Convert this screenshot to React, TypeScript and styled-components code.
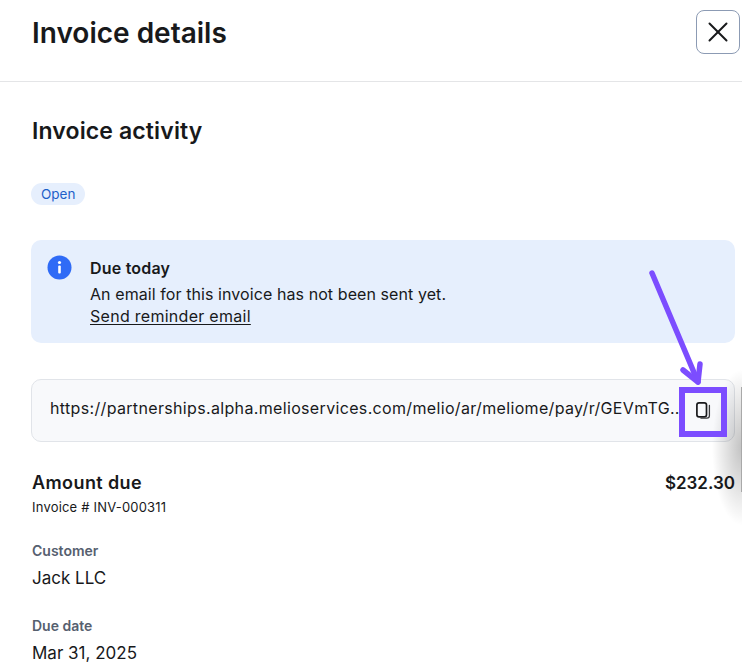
import React from "react";
import styled, { createGlobalStyle } from "styled-components";
import { X } from "lucide-react";

const GlobalStyle = createGlobalStyle`
  html, body {
    margin: 0;
    padding: 0;
    background: #fff;
  }
  body {
    font-family: "Inter", "Noto Sans", sans-serif;
    color: #18191b;
  }
`;

const Page = styled.div`
  position: relative;
  width: 742px;
  height: 671px;
  overflow: hidden;
`;

const Header = styled.header`
  height: 82px;
  padding: 10px 2px 0 32px;
  box-sizing: border-box;
  border-bottom: 1px solid #e4e5e7;
  display: flex;
  justify-content: space-between;
  align-items: flex-start;
`;

const Title = styled.h1`
  margin: 6px 0 0;
  font-size: 28px;
  line-height: 34px;
  font-weight: 600;
`;

const CloseButton = styled.button`
  width: 44px;
  height: 44px;
  padding: 0;
  background: #fff;
  border: 1px solid #8c9bb4;
  border-radius: 8px;
  display: flex;
  align-items: center;
  justify-content: center;
  color: #18191b;
`;

const Content = styled.main`
  padding: 35px 7px 0 31px;
`;

const SectionTitle = styled.h2`
  margin: 0 0 0 1px;
  font-size: 23px;
  line-height: 28px;
  font-weight: 600;
  letter-spacing: 0.13px;
`;

const Badge = styled.span`
  display: inline-block;
  margin-top: 38px;
  height: 22px;
  padding: 0 10px;
  border-radius: 11px;
  background: #e6effd;
  color: #1f5fc9;
  font-size: 13.5px;
  line-height: 22px;
`;

const Banner = styled.section`
  margin-top: 35px;
  height: 103px;
  box-sizing: border-box;
  padding: 15px 16px;
  background: #e6effd;
  border-radius: 10px;
  display: flex;
  gap: 18px;
`;

const BannerIcon = styled.svg`
  width: 25px;
  height: 25px;
  flex: none;
`;

const BannerText = styled.div`
  font-size: 16px;
  line-height: 22px;
  padding-top: 2px;
  letter-spacing: 0.08px;
`;

const BannerTitle = styled.div`
  font-weight: 600;
  margin-bottom: 4px;
  letter-spacing: 0.2px;
`;

const BannerLink = styled.a`
  display: block;
  color: #18191b;
  text-decoration: underline;
  text-underline-offset: 2px;
  letter-spacing: 0.28px;
`;

const LinkBox = styled.div`
  margin-top: 36px;
  height: 63px;
  box-sizing: border-box;
  padding: 0 14px 0 18px;
  background: #f8f9fb;
  border: 1px solid #e1e4e9;
  border-radius: 10px;
  display: flex;
  align-items: center;
  justify-content: space-between;
`;

const LinkText = styled.span`
  width: 632px;
  margin-bottom: 6px;
  overflow: hidden;
  white-space: nowrap;
  font-size: 16px;
  letter-spacing: 0.34px;
`;

const CopyButton = styled.span`
  width: 34px;
  height: 36px;
  display: flex;
  align-items: center;
  justify-content: center;
`;

const AmountRow = styled.div`
  margin: 29px 0 0 1px;
  display: flex;
  justify-content: space-between;
  align-items: center;
  font-size: 17px;
  line-height: 24px;
  font-weight: 600;
`;

const AmountLabel = styled.span`
  font-size: 18px;
  letter-spacing: 0.4px;
`;

const InvoiceNumber = styled.div`
  margin: 3px 0 0 1px;
  font-size: 13px;
  line-height: 18px;
  letter-spacing: 0.2px;
`;

const Field = styled.div`
  margin: 26px 0 0 1px;
`;

const FieldLabel = styled.div`
  font-size: 14px;
  line-height: 18px;
  font-weight: 600;
  color: #56606f;
`;

const FieldValue = styled.div`
  margin-top: 5px;
  font-size: 17px;
  line-height: 26px;
`;

const EdgeShadow = styled.div`
  position: absolute;
  top: 370px;
  right: 0;
  width: 30px;
  height: 155px;
  background: radial-gradient(ellipse 30px 78px at 100% 50%, rgba(0, 0, 0, 0.24), rgba(0, 0, 0, 0));
  pointer-events: none;

  &::after {
    content: "";
    position: absolute;
    top: 17px;
    right: 0;
    width: 1px;
    height: 105px;
    background: #a9a9a9;
  }
`;

const HighlightBox = styled.div`
  position: absolute;
  left: 679px;
  top: 387px;
  width: 48px;
  height: 50px;
  box-sizing: border-box;
  border: 6px solid #7c4dff;
`;

const Arrow = styled.svg`
  position: absolute;
  left: 640px;
  top: 260px;
  width: 70px;
  height: 125px;
`;

export default function App() {
  return (
    <Page>
      <GlobalStyle />
      <Header>
        <Title>Invoice details</Title>
        <CloseButton aria-label="Close">
          <X size={34} strokeWidth={1.4} />
        </CloseButton>
      </Header>
      <Content>
        <SectionTitle>Invoice activity</SectionTitle>
        <Badge>Open</Badge>
        <Banner>
          <BannerIcon viewBox="0 0 25 25">
            <circle cx="12.5" cy="12.5" r="12" fill="#2f6bf6" />
            <rect x="11.2" y="10.5" width="2.6" height="8" rx="1" fill="#fff" />
            <circle cx="12.5" cy="7.5" r="1.6" fill="#fff" />
          </BannerIcon>
          <BannerText>
            <BannerTitle>Due today</BannerTitle>
            <div>An email for this invoice has not been sent yet.</div>
            <BannerLink>Send reminder email</BannerLink>
          </BannerText>
        </Banner>
        <LinkBox>
          <LinkText>https://partnerships.alpha.melioservices.com/melio/ar/meliome/pay/r/GEVmTG..</LinkText>
          <CopyButton>
            <svg width="15" height="17" viewBox="0 0 15 17" fill="none">
              <rect x="0.9" y="0.9" width="9.6" height="14" rx="2.2" stroke="#18191b" strokeWidth="1.7" />
              <path d="M13.4 3.5V13.8a2.4 2.4 0 0 1-2.4 2.4H5" stroke="#3a3b3d" strokeWidth="1.3" strokeLinecap="round" />
            </svg>
          </CopyButton>
        </LinkBox>
        <AmountRow>
          <AmountLabel>Amount due</AmountLabel>
          <span>$232.30</span>
        </AmountRow>
        <InvoiceNumber>Invoice # INV-000311</InvoiceNumber>
        <Field>
          <FieldLabel>Customer</FieldLabel>
          <FieldValue>Jack LLC</FieldValue>
        </Field>
        <Field>
          <FieldLabel>Due date</FieldLabel>
          <FieldValue>Mar 31, 2025</FieldValue>
        </Field>
      </Content>
      <EdgeShadow />
      <HighlightBox />
      <Arrow viewBox="0 0 70 125" fill="none" stroke="#7c4dff" strokeWidth="5.5" strokeLinecap="round" strokeLinejoin="round">
        <path d="M12 13L58 122" />
        <path d="M43 110L58 122L60 104" />
      </Arrow>
    </Page>
  );
}
